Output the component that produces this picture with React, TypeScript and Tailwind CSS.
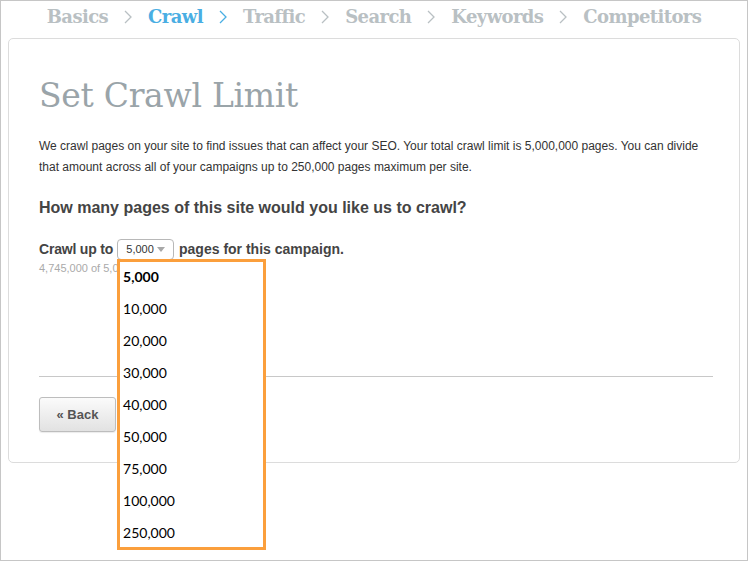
import React from "react";

const crumbs = ["Basics", "Crawl", "Traffic", "Search", "Keywords", "Competitors"];
const options = ["5,000", "10,000", "20,000", "30,000", "40,000", "50,000", "75,000", "100,000", "250,000"];

export default function App() {
  return (
    <div className="relative w-[748px] h-[561px] border border-[#c6c6c6] bg-white overflow-hidden" style={{ fontFamily: '"Liberation Sans", Arial, sans-serif' }}>
      <div className="h-[31px] flex items-center justify-center gap-[13px]" style={{ fontFamily: '"DejaVu Serif", serif' }}>
        {crumbs.map((c, i) => (
          <React.Fragment key={c}>
            {i > 0 && (
              <svg width="10" height="16" viewBox="0 0 10 16" className="mx-[2px]">
                <path d="M2 2 L8 8 L2 14" fill="none" stroke={i === 2 ? "#4aaee3" : "#b9c0c3"} strokeWidth="1.3" />
              </svg>
            )}
            <span className={`text-[18px] font-bold tracking-[-0.6px] ${c === "Crawl" ? "text-[#4aaee3]" : "text-[#b9c0c3]"}`}>{c}</span>
          </React.Fragment>
        ))}
      </div>
      <div className="mx-[7px] mt-[6px] h-[425px] border border-[#dcdcdc] rounded-[5px] pl-[30px] pr-[26px]">
        <h1 className="text-[33px] font-light text-[#9aa4a9] leading-none pt-[40px] tracking-[-0.3px]" style={{ fontFamily: '"DejaVu Serif", serif' }}>Set Crawl Limit</h1>
        <p className="text-[12px] text-[#333] leading-[21px] mt-[24px] pr-[8px]">
          We crawl pages on your site to find issues that can affect your SEO. Your total crawl limit is 5,000,000 pages. You can divide that amount across all of your campaigns up to 250,000 pages maximum per site.
        </p>
        <h2 className="text-[16px] font-bold text-[#444] mt-[20px] leading-[20px]">How many pages of this site would you like us to crawl?</h2>
        <div className="flex items-center mt-[20px] text-[14px] font-bold text-[#444] h-[22px]">
          <span className="tracking-[-0.2px]">Crawl up to</span>
          <div className="relative ml-[4px] mr-[5px]">
            <div className="w-[57px] h-[21px] border border-[#b8b8b8] rounded-[4px] flex items-center justify-center gap-[3px] bg-white">
              <span className="text-[11px] font-normal text-[#333]">5,000</span>
              <svg width="8" height="5" viewBox="0 0 8 5"><path d="M0 0 L8 0 L4 5 Z" fill="#a8a8a8" /></svg>
            </div>
            <div className="absolute left-0 top-[20px] w-[149px] h-[291px] border-[3px] border-[#fb9f3c] bg-white z-10" style={{ fontFamily: 'Lato, sans-serif' }}>
              <div className="-mt-[1px]">
                {options.map((o, i) => (
                  <div key={o} className={`h-[32px] pl-[3px] flex items-center text-[14px] text-black ${i === 0 ? "font-bold" : "font-normal"}`}>{o}</div>
                ))}
              </div>
            </div>
          </div>
          <span>pages for this campaign.</span>
        </div>
        <div className="text-[11px] text-[#aaa] leading-[16px]">4,745,000 of 5,000,000 pages remaining</div>
        <div className="border-t border-[#c8c8c8] mt-[100px]" />
        <div className="mt-[20px] w-[77px] h-[35px] rounded-[3px] border border-[#bdbdbd] bg-gradient-to-b from-[#fbfbfb] to-[#e2e2e2] flex items-center justify-center text-[13px] font-bold text-[#555] shadow-[0_1px_1px_rgba(0,0,0,0.08)]">
          « Back
        </div>
      </div>
    </div>
  );
}
